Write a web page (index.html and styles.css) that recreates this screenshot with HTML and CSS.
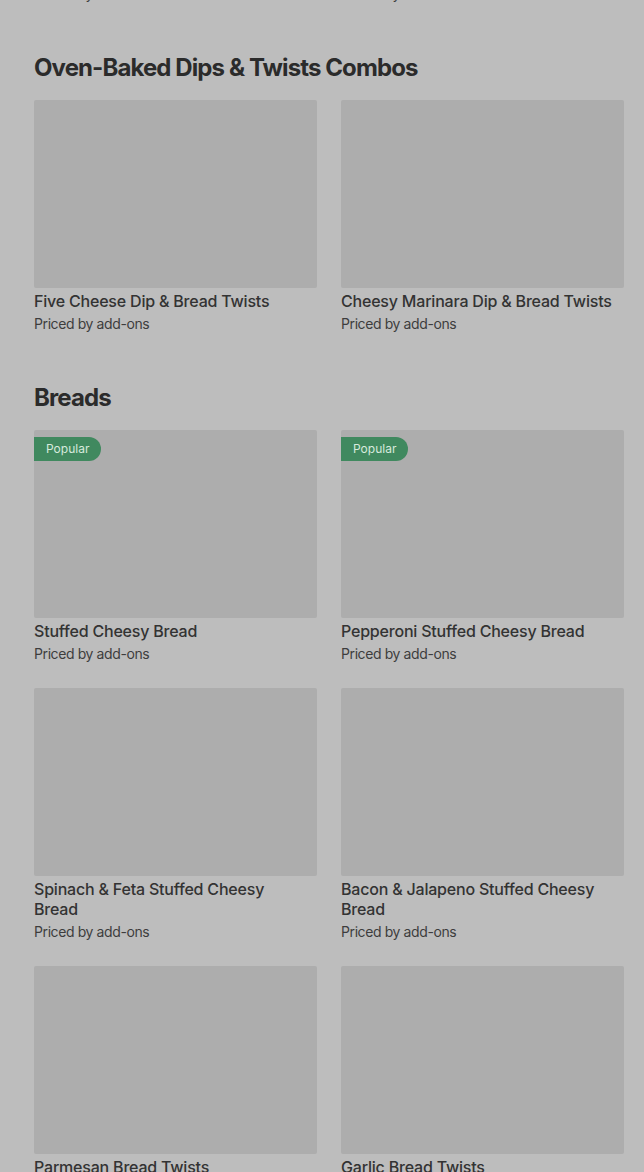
FILE: index.html
```html
<!DOCTYPE html>
<html lang="en">
<head>
  <meta charset="UTF-8">
  <meta name="viewport" content="width=device-width, initial-scale=1.0">
  <title>Menu</title>
  <link rel="stylesheet" href="styles.css">
</head>
<body>
  <main class="menu">
    <div class="grid prev">
      <div class="item_info"><p class="item_price">Priced by add-ons</p></div>
      <div class="item_info"><p class="item_price">Priced by add-ons</p></div>
    </div>

    <section class="section">
      <h2 class="section_title">Oven-Baked Dips &amp; Twists Combos</h2>
      <ul class="grid">
        <li class="item">
          <div class="item_img"></div>
          <div class="item_info">
            <h3 class="item_name">Five Cheese Dip &amp; Bread Twists</h3>
            <p class="item_price">Priced by add-ons</p>
          </div>
        </li>
        <li class="item">
          <div class="item_img"></div>
          <div class="item_info">
            <h3 class="item_name">Cheesy Marinara Dip &amp; Bread Twists</h3>
            <p class="item_price">Priced by add-ons</p>
          </div>
        </li>
      </ul>
    </section>

    <section class="section">
      <h2 class="section_title">Breads</h2>
      <ul class="grid">
        <li class="item">
          <div class="item_img"><span class="badge">Popular</span></div>
          <div class="item_info">
            <h3 class="item_name">Stuffed Cheesy Bread</h3>
            <p class="item_price">Priced by add-ons</p>
          </div>
        </li>
        <li class="item">
          <div class="item_img"><span class="badge">Popular</span></div>
          <div class="item_info">
            <h3 class="item_name">Pepperoni Stuffed Cheesy Bread</h3>
            <p class="item_price">Priced by add-ons</p>
          </div>
        </li>
        <li class="item">
          <div class="item_img"></div>
          <div class="item_info">
            <h3 class="item_name">Spinach &amp; Feta Stuffed Cheesy Bread</h3>
            <p class="item_price">Priced by add-ons</p>
          </div>
        </li>
        <li class="item">
          <div class="item_img"></div>
          <div class="item_info">
            <h3 class="item_name">Bacon &amp; Jalapeno Stuffed Cheesy Bread</h3>
            <p class="item_price">Priced by add-ons</p>
          </div>
        </li>
        <li class="item">
          <div class="item_img"></div>
          <div class="item_info">
            <h3 class="item_name">Parmesan Bread Twists</h3>
            <p class="item_price">Priced by add-ons</p>
          </div>
        </li>
        <li class="item">
          <div class="item_img"></div>
          <div class="item_info">
            <h3 class="item_name">Garlic Bread Twists</h3>
            <p class="item_price">Priced by add-ons</p>
          </div>
        </li>
      </ul>
    </section>
  </main>
</body>
</html>
```

FILE: styles.css
```css
*,*:before,*:after{
  box-sizing: border-box;
  margin: 0;
  padding: 0;
}

html,body{
  height: 100%;
}
body{
  background: #bdbdbd;
  color: #2e2e2e;
  font-family: Inter, "Noto Sans", sans-serif;
  overflow: hidden;
}
.menu{
  padding: 0 20px 0 34px;
  margin-top: -22px;
}
.grid{
  display: grid;
  grid-template-columns: 283px 283px;
  column-gap: 24px;
  row-gap: 24px;
  list-style-type: none;
}
.section{
  padding-top: 48px;
}
.section_title{
  font-size: 24px;
  line-height: 32px;
  font-weight: 700;
  letter-spacing: -0.9px;
  color: #2b2b2b;
  margin-bottom: 16px;
}
.item_img{
  position: relative;
  height: 188px;
  background: #adadad;
  border-radius: 2px;
}
.item_info{
  padding-top: 3px;
  padding-right: 8px;
}
.item_name{
  font-size: 16px;
  line-height: 20px;
  font-weight: 500;
  letter-spacing: -0.2px;
  color: #333;
}
.item_price{
  margin-top: 3px;
  font-size: 14px;
  line-height: 20px;
  letter-spacing: -0.4px;
  color: #3d3d3d;
}
.badge{
  position: absolute;
  left: 0;
  top: 7px;
  height: 24px;
  padding: 0 12px;
  line-height: 24px;
  font-size: 12px;
  color: #d7eadd;
  background: #40895f;
  border-radius: 0 12px 12px 0;
}
```
